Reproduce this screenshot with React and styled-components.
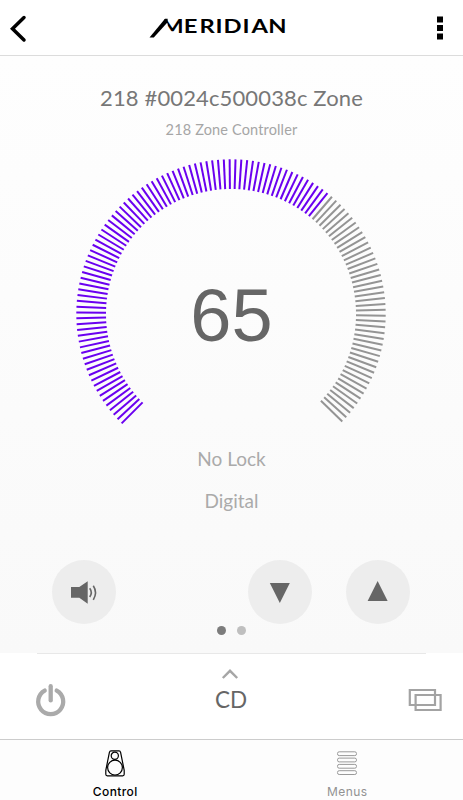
import styled, { createGlobalStyle } from "styled-components";

const GlobalStyle = createGlobalStyle`
  * {
    box-sizing: border-box;
  }
  body {
    margin: 0;
    background: #fff;
    font-family: Lato, sans-serif;
  }
  button {
    border: 0;
    padding: 0;
    background: none;
    font: inherit;
  }
  svg {
    display: block;
  }
`;

const Screen = styled.div`
  width: 463px;
  height: 800px;
  display: flex;
  flex-direction: column;
  overflow: hidden;
`;
const Header = styled.header`
  height: 56px;
  padding: 0 19px 0 8px;
  display: grid;
  grid-template-columns: 60px 1fr 60px;
  align-items: center;
  border-bottom: 1px solid #dcdcdc;
  & > button:last-child {
    justify-self: end;
  }
`;
const LogoWrap = styled.div`
  justify-self: center;
  margin: 0 16px 4px 0;
`;
const Main = styled.main`
  height: 597px;
  padding-top: 28px;
  display: flex;
  flex-direction: column;
  align-items: center;
  background: linear-gradient(#fefefe, #f9f9f9);
`;
const Title = styled.h1`
  margin: 0;
  color: #777;
  font-size: 22px;
  font-weight: 400;
  line-height: 28px;
  letter-spacing: 0.13px;
`;
const SubTitle = styled.p`
  margin: 9px 0 19px;
  color: #a6a6a6;
  font-size: 14.5px;
  line-height: 18px;
  letter-spacing: 0.15px;
`;
const DialWrap = styled.div`
  display: grid;
  width: 311px;
  height: 268px;
  & > * {
    grid-area: 1 / 1;
  }
`;
const Volume = styled.span`
  place-self: center;
  margin-top: 47px;
  color: #666;
  font-family: "Liberation Sans", sans-serif;
  font-size: 74px;
  line-height: 80px;
`;
const StatusList = styled.ul`
  margin: 12px 0 0;
  padding: 0;
  list-style: none;
  text-align: center;
`;
const Status = styled.li`
  height: 42px;
  color: #aaa;
  font-size: 19px;
  line-height: 42px;
`;
const Controls = styled.div`
  align-self: stretch;
  margin-top: 38px;
  padding: 0 53px 0 52px;
  display: flex;
  gap: 34px;
  & > :first-child {
    margin-right: auto;
  }
`;
const RoundButton = styled.button`
  width: 64px;
  height: 64px;
  border-radius: 50%;
  background: #ededed;
`;
const Pager = styled.div`
  margin-top: 2px;
  display: flex;
  gap: 11px;
`;
const Dot = styled.span`
  width: 9px;
  height: 9px;
  border-radius: 50%;
  background: ${(props) => (props.$active ? "#7c7c7c" : "#bfbfbf")};
`;
const SourceBar = styled.section`
  height: 86px;
  padding: 0 21px 0 34px;
  display: grid;
  grid-template-columns: 34px 1fr 34px;
  grid-template-rows: 1px 1fr;
  background: #fff;
`;
const Hairline = styled.div`
  grid-column: 1 / -1;
  margin: 0 16px 0 3px;
  background: #e8e8e8;
`;
const SideButton = styled.button`
  height: 34px;
  margin-top: 29px;
`;
const Source = styled.button`
  display: flex;
  flex-direction: column;
  align-items: center;
  justify-content: flex-start;
  padding-top: 14px;
  margin-right: 17px;
  color: #666;
  font-size: 22.5px;
  line-height: 28px;
  & > span {
    margin: 6px 0 0 3px;
  }
`;
const TabBar = styled.nav`
  height: 61px;
  display: grid;
  grid-template-columns: 1fr 1fr;
  border-top: 1px solid #ccc;
  background: #fdfdfd;
`;
const Tab = styled.button`
  display: flex;
  flex-direction: column;
  align-items: center;
  padding-top: 9px;
  padding-right: ${(props) => (props.$active ? "1px" : "0")};
  color: ${(props) => (props.$active ? "#000" : "#929292")};
  font-family: Inter, sans-serif;
  font-size: 12px;
  font-weight: ${(props) => (props.$active ? 500 : 400)};
  line-height: 16px;
  letter-spacing: 0.4px;
  & > span {
    margin-top: 7px;
  }
`;

const TICKS = 125;
const START = -135;
const SWEEP = 269;

function Dial({ value }) {
  const lit = Math.floor((TICKS * value) / 100);
  return (
    <DialWrap>
      <svg width="311" height="268">
        {Array.from({ length: TICKS }, (_, i) => (
          <line
            key={i}
            x1="155"
            x2="155"
            y1="1.3"
            y2="31"
            stroke={i < lit ? "#6a00f0" : "#949494"}
            strokeWidth="2"
            transform={`rotate(${START + (i * SWEEP) / (TICKS - 1)} 155 156)`}
          />
        ))}
      </svg>
      <Volume>{value}</Volume>
    </DialWrap>
  );
}

function Logo() {
  return (
    <svg width="138" height="24" viewBox="0 0 138 24">
      <defs>
        {/* drops the left leg of the M, the swash takes its place */}
        <clipPath id="m-cut">
          <path d="M15.5 0H138V24H18.6V9.5L15.5 7Z" />
        </clipPath>
      </defs>
      <g clipPath="url(#m-cut)">
        <text
          transform="scale(1.2 1)"
          y="19"
          x="10.2 29 42 55.4 62 77.9 85.4 99.3"
          fontFamily="Lato, sans-serif"
          fontSize="19.8"
          fontWeight="700"
          fill="#000"
        >
          MERIDIAN
        </text>
      </g>
      <path d="M0.5 23.4 L16 4.8 H18.6 V8.2 L4.8 23.4Z" />
    </svg>
  );
}

export default function App() {
  return (
    <>
      <GlobalStyle />
      <Screen>
        <Header>
          <button aria-label="Back">
            <svg width="20" height="30" fill="none" stroke="#000" strokeWidth="3.5">
              <path d="M16 4.5 L4.5 15.7 L16 27" strokeLinecap="round" />
            </svg>
          </button>
          <LogoWrap>
            <Logo />
          </LogoWrap>
          <button aria-label="More">
            <svg width="8" height="24">
              <path d="M1 0.5h6v6h-6z M1 9h6v6h-6z M1 17.5h6v6h-6z" />
            </svg>
          </button>
        </Header>

        <Main>
          <Title>218 #0024c500038c Zone</Title>
          <SubTitle>218 Zone Controller</SubTitle>
          <Dial value={65} />
          <StatusList>
            <Status>No Lock</Status>
            <Status>Digital</Status>
          </StatusList>
          <Controls>
            <RoundButton aria-label="Mute">
              <svg width="64" height="64">
                <path d="M19 27h8.3l8.4-5.8v22.6l-8.4-6h-8.3z" fill="#666" />
                <path d="M37.7 28.2q3.2 4.3 0 8.8M41.3 25.8q4.4 6.7 0 14" fill="none" stroke="#666" strokeWidth="1.6" />
              </svg>
            </RoundButton>
            <RoundButton aria-label="Volume down">
              <svg width="64" height="64" fill="#666">
                <path d="M21.8 23h20l-10 20z" />
              </svg>
            </RoundButton>
            <RoundButton aria-label="Volume up">
              <svg width="64" height="64" fill="#666">
                <path d="M21.6 41h20l-10 -20z" />
              </svg>
            </RoundButton>
          </Controls>
          <Pager>
            <Dot $active />
            <Dot />
          </Pager>
        </Main>

        <SourceBar>
          <Hairline />
          <SideButton aria-label="Power">
            <svg width="34" height="34" fill="none" stroke="#aaa" strokeWidth="4.3" strokeLinecap="round">
              <path d="M10.7 7.6A12.5 12.5 0 1 0 22.7 7.6" />
              <path d="M16.7 3.2v14.2" />
            </svg>
          </SideButton>
          <Source>
            <svg width="18" height="12" fill="none" stroke="#a6a6a6" strokeWidth="2.4">
              <path d="M1.8 10 L9 2.8 L16.2 10" />
            </svg>
            <span>CD</span>
          </Source>
          <SideButton aria-label="Rooms">
            <svg width="34" height="34" fill="none" stroke="#a3a3a3" strokeWidth="2.2">
              <path d="M1.8 7h25.2v15h-25.2z M7.6 12h25v15h-25z" />
            </svg>
          </SideButton>
        </SourceBar>

        <TabBar>
          <Tab $active>
            <svg width="22" height="28" fill="none" stroke="#000" strokeWidth="1.2">
              <path d="M7 1.8h8q1.2 0 1.6 1.5l3.6 18v4q0 1.5-1.5 1.5H3.3q-1.5 0-1.5-1.5v-4l3.6-18q.4-1.5 1.6-1.5z" />
              <circle cx="10.8" cy="6.8" r="3.6" />
              <circle cx="11" cy="18.6" r="7.4" />
            </svg>
            <span>Control</span>
          </Tab>
          <Tab>
            <svg width="22" height="28" fill="none" stroke="#999" strokeWidth="1">
              {[2.8, 9.1, 15.4, 21.7].map((y) => (
                <rect key={y} x="1.5" y={y} width="19" height="3.8" rx="1.7" />
              ))}
            </svg>
            <span>Menus</span>
          </Tab>
        </TabBar>
      </Screen>
    </>
  );
}
